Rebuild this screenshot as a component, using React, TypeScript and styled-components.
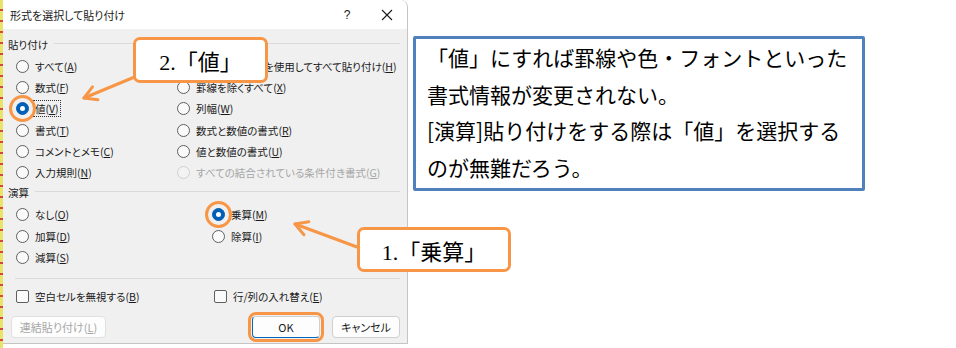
import styled, { createGlobalStyle } from "styled-components";

const GlobalStyle = createGlobalStyle`
  html, body {
    margin: 0;
    padding: 0;
    background: #ffffff;
    overflow: hidden;
  }
`;

const ORANGE = "#f79646";

const Page = styled.div`
  position: relative;
  display: flex;
  width: 956px;
  height: 348px;
  background: #ffffff;
`;

const SheetEdge = styled.div`
  width: 3px;
  height: 348px;
  background: repeating-linear-gradient(
    180deg,
    #e9e36a 0px,
    #e9e36a 9px,
    #d8463c 9px,
    #d8463c 11px
  );
`;

const Dialog = styled.div`
  width: 405px;
  height: 344px;
  display: flex;
  flex-direction: column;
  background: #f0f0f0;
  border-right: 1px solid #c4c4c4;
  border-bottom: 1px solid #c4c4c4;
  border-top-right-radius: 7px;
  box-sizing: border-box;
  font-family: "Noto Sans CJK JP", "Noto Sans", sans-serif;
  font-size: 10.5px;
  font-feature-settings: "palt";
  color: #1a1a1a;
`;

const TitleBar = styled.div`
  height: 29px;
  display: flex;
  align-items: center;
  background: #ffffff;
  padding-left: 7px;
  border-top-right-radius: 7px;
  font-size: 11px;
`;

const Title = styled.div`
  flex: 1;
`;

const TitleButton = styled.div`
  width: 40px;
  height: 29px;
  display: flex;
  align-items: center;
  justify-content: center;
  font-family: "Liberation Sans", sans-serif;
  font-size: 12px;
`;

const Body = styled.div`
  display: flex;
  flex-direction: column;
  padding: 0 7px 0 5px;
`;

const GroupHeader = styled.div<{ $top: number }>`
  display: flex;
  align-items: center;
  height: 16px;
  margin-top: ${(p) => p.$top}px;
  gap: 6px;
  &::after {
    content: "";
    flex: 1;
    height: 1px;
    background: #dadada;
    margin-top: -2px;
  }
`;

const OptionGrid = styled.div<{ $col: number; $row: number; $rows: number; $top: number }>`
  display: grid;
  grid-template-columns: ${(p) => p.$col}px 1fr;
  grid-template-rows: ${(p) => `repeat(${p.$rows}, ${p.$row}px)`};
  grid-auto-flow: column;
  padding-left: 8px;
  margin-top: ${(p) => p.$top}px;
`;

const Option = styled.label<{ $disabled?: boolean }>`
  display: flex;
  align-items: center;
  gap: 6px;
  white-space: nowrap;
  min-width: 0;
  color: ${(p) => (p.$disabled ? "#a6a6a6" : "#1a1a1a")};
`;

const Radio = styled.span<{ $checked?: boolean; $marked?: boolean; $disabled?: boolean }>`
  position: relative;
  flex: none;
  width: 13px;
  height: 13px;
  box-sizing: border-box;
  border-radius: 50%;
  border: 1px solid
    ${(p) => (p.$checked ? "#005fb8" : p.$disabled ? "#cfcfcf" : "#5f5f5f")};
  background: ${(p) => (p.$checked ? "#005fb8" : p.$disabled ? "#f3f3f3" : "#fafafa")};
  &::before {
    content: "";
    display: ${(p) => (p.$checked ? "block" : "none")};
    position: absolute;
    left: 3px;
    top: 3px;
    width: 5px;
    height: 5px;
    border-radius: 50%;
    background: #ffffff;
  }
  &::after {
    content: "";
    display: ${(p) => (p.$marked ? "block" : "none")};
    position: absolute;
    inset: -8px;
    border: 3px solid ${ORANGE};
    border-radius: 50%;
  }
`;

const Check = styled.span`
  flex: none;
  width: 13px;
  height: 13px;
  box-sizing: border-box;
  border: 1px solid #5f5f5f;
  border-radius: 2px;
  background: #fafafa;
`;

const Focused = styled.span`
  outline: 1px dotted #333;
  outline-offset: 0px;
  padding: 0 1px;
  margin-left: -1px;
`;

const Separator = styled.div<{ $top: number }>`
  height: 1px;
  background: #dadada;
  margin: ${(p) => p.$top}px 0 0 7px;
`;

const CheckRow = styled.div`
  display: grid;
  grid-template-columns: 198px 1fr;
  height: 20px;
  padding-left: 8px;
  margin-top: 8px;
`;

const ButtonRow = styled.div`
  display: flex;
  align-items: center;
  gap: 12px;
  margin-top: 9px;
  padding-left: 3px;
`;

const Button = styled.div<{ $width: number; $disabled?: boolean; $primary?: boolean; $marked?: boolean }>`
  width: ${(p) => p.$width}px;
  height: 22px;
  box-sizing: border-box;
  display: flex;
  align-items: center;
  justify-content: center;
  background: #fdfdfd;
  border: 1px solid ${(p) => (p.$disabled ? "#e0e0e0" : "#cfcfcf")};
  border-left-color: ${(p) => (p.$primary ? "#0067c0" : undefined)};
  border-bottom-color: ${(p) => (p.$primary ? "#0067c0" : undefined)};
  border-radius: 4px;
  color: ${(p) => (p.$disabled ? "#a6a6a6" : "#1a1a1a")};
  font-size: 11px;
  outline: ${(p) => (p.$marked ? `3px solid ${ORANGE}` : "none")};
  outline-offset: 1px;
  &:first-child {
    margin-right: auto;
  }
`;

const Side = styled.div`
  padding: 36px 0 0 5px;
`;

const NoteBox = styled.div`
  width: 452px;
  height: 155px;
  box-sizing: border-box;
  border: 3px solid #4f81bd;
  border-radius: 2px;
  padding: 0 0 0 11px;
  font-family: "Noto Sans CJK JP", sans-serif;
  font-size: 21px;
  line-height: 36.5px;
  color: #000000;
  white-space: pre-line;
`;

const Callout = styled.div<{ $x: number; $y: number; $w: number; $h: number }>`
  position: absolute;
  left: ${(p) => p.$x}px;
  top: ${(p) => p.$y}px;
  width: ${(p) => p.$w}px;
  height: ${(p) => p.$h}px;
  box-sizing: border-box;
  display: flex;
  align-items: center;
  justify-content: center;
  background: #ffffff;
  border: 3px solid ${ORANGE};
  border-radius: 7px;
  font-family: "Liberation Serif", "Noto Sans CJK JP", serif;
  font-size: 22px;
  color: #000000;
`;

const Arrows = styled.svg`
  position: absolute;
  left: 0;
  top: 0;
  pointer-events: none;
`;

type Opt = {
  label: string;
  k: string;
  checked?: boolean;
  marked?: boolean;
  disabled?: boolean;
  focus?: boolean;
};

const pasteOptions: Opt[] = [
  { label: "すべて", k: "A" },
  { label: "数式", k: "F" },
  { label: "値", k: "V", checked: true, marked: true, focus: true },
  { label: "書式", k: "T" },
  { label: "コメントとメモ", k: "C" },
  { label: "入力規則", k: "N" },
  { label: "すべてのテーマを使用してすべて貼り付け", k: "H" },
  { label: "罫線を除くすべて", k: "X" },
  { label: "列幅", k: "W" },
  { label: "数式と数値の書式", k: "R" },
  { label: "値と数値の書式", k: "U" },
  { label: "すべての結合されている条件付き書式", k: "G", disabled: true },
];

const opOptions: Opt[] = [
  { label: "なし", k: "O" },
  { label: "加算", k: "D" },
  { label: "減算", k: "S" },
  { label: "乗算", k: "M", checked: true, marked: true },
  { label: "除算", k: "I" },
];

function Label({ label, k }: { label: string; k: string }) {
  return (
    <>
      {label}(<u>{k}</u>)
    </>
  );
}

function RadioOption({ o }: { o: Opt }) {
  const text = <Label label={o.label} k={o.k} />;
  return (
    <Option $disabled={o.disabled}>
      <Radio $checked={o.checked} $marked={o.marked} $disabled={o.disabled} />
      {o.focus ? <Focused>{text}</Focused> : <span>{text}</span>}
    </Option>
  );
}

function Arrow({ x1, y1, x2, y2 }: { x1: number; y1: number; x2: number; y2: number }) {
  const len = Math.hypot(x2 - x1, y2 - y1);
  const bx = (x1 - x2) / len;
  const by = (y1 - y2) / len;
  const c = Math.cos(Math.PI / 6);
  const s = Math.sin(Math.PI / 6);
  const h = 14;
  const ax = x2 + (bx * c - by * s) * h;
  const ay = y2 + (bx * s + by * c) * h;
  const cx = x2 + (bx * c + by * s) * h;
  const cy = y2 + (-bx * s + by * c) * h;
  return (
    <g stroke={ORANGE} strokeWidth={3} strokeLinecap="round" fill="none">
      <line x1={x1} y1={y1} x2={x2} y2={y2} />
      <polyline points={`${ax},${ay} ${x2},${y2} ${cx},${cy}`} strokeLinejoin="round" />
    </g>
  );
}

export default function App() {
  return (
    <Page>
      <GlobalStyle />
      <SheetEdge />
      <Dialog>
        <TitleBar>
          <Title>形式を選択して貼り付け</Title>
          <TitleButton>?</TitleButton>
          <TitleButton>
            <svg width="12" height="12" viewBox="0 0 12 12">
              <path d="M1 1 L11 11 M11 1 L1 11" stroke="#1a1a1a" strokeWidth="1.1" />
            </svg>
          </TitleButton>
        </TitleBar>
        <Body>
          <GroupHeader $top={7}>貼り付け</GroupHeader>
          <OptionGrid $col={161} $row={21.2} $rows={6} $top={4}>
            {pasteOptions.map((o) => (
              <RadioOption key={o.k} o={o} />
            ))}
          </OptionGrid>
          <GroupHeader $top={1}>演算</GroupHeader>
          <OptionGrid $col={196} $row={21.5} $rows={3} $top={4}>
            {opOptions.map((o) => (
              <RadioOption key={o.k} o={o} />
            ))}
          </OptionGrid>
          <Separator $top={9} />
          <CheckRow>
            <Option>
              <Check />
              <span>
                <Label label="空白セルを無視する" k="B" />
              </span>
            </Option>
            <Option>
              <Check />
              <span>
                <Label label="行/列の入れ替え" k="E" />
              </span>
            </Option>
          </CheckRow>
          <ButtonRow>
            <Button $width={95} $disabled>
              <Label label="連結貼り付け" k="L" />
            </Button>
            <Button $width={68} $primary $marked>
              OK
            </Button>
            <Button $width={68}>キャンセル</Button>
          </ButtonRow>
        </Body>
      </Dialog>
      <Side>
        <NoteBox>
          {"「値」にすれば罫線や色・フォントといった\n書式情報が変更されない。\n[演算]貼り付けをする際は「値」を選択する\nのが無難だろう。"}
        </NoteBox>
      </Side>
      <Arrows width="956" height="348">
        <Arrow x1={137} y1={76} x2={84} y2={98} />
        <Arrow x1={357} y1={247} x2={295} y2={224} />
      </Arrows>
      <Callout $x={133} $y={37} $w={135} $h={46}>
        2.「値」
      </Callout>
      <Callout $x={357} $y={227} $w={154} $h={45}>
        1.「乗算」
      </Callout>
    </Page>
  );
}
